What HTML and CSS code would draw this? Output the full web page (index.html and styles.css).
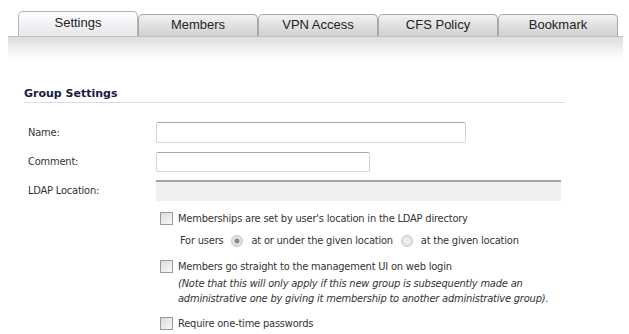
FILE: index.html
```html
<!DOCTYPE html>
<html>
<head>
<meta charset="utf-8">
<link rel="stylesheet" href="styles.css">
</head>
<body>
<div class="tabs">
  <div class="tab active">Settings</div>
  <div class="tab">Members</div>
  <div class="tab">VPN Access</div>
  <div class="tab">CFS Policy</div>
  <div class="tab">Bookmark</div>
</div>
<div class="band"></div>
<div class="content">
  <h2 class="heading">Group Settings</h2>
  <div class="row">
    <label class="label">Name:</label>
    <span class="input name-input"></span>
  </div>
  <div class="row">
    <label class="label">Comment:</label>
    <span class="input comment-input"></span>
  </div>
  <div class="row">
    <label class="label">LDAP Location:</label>
    <span class="input ldap-input"></span>
  </div>
  <div class="options">
    <div class="opt">
      <span class="check"></span>
      <div class="opt-text">
        <div>Memberships are set by user's location in the LDAP directory</div>
        <div class="sub">For users <span class="radio on"></span> at or under the given location <span class="radio"></span> at the given location</div>
      </div>
    </div>
    <div class="opt">
      <span class="check"></span>
      <div class="opt-text">
        <div>Members go straight to the management UI on web login</div>
        <div class="note">(Note that this will only apply if this new group is subsequently made an administrative one by giving it membership to another administrative group).</div>
      </div>
    </div>
    <div class="opt">
      <span class="check"></span>
      <div class="opt-text">
        <div>Require one-time passwords</div>
      </div>
    </div>
  </div>
</div>
</body>
</html>
```
FILE: styles.css
```css
html, body {
  margin: 0;
  padding: 0;
  background: #fff;
}
body {
  width: 629px;
  height: 334px;
  overflow: hidden;
  font-family: "DejaVu Sans Condensed", "DejaVu Sans", sans-serif;
  font-size: 11px;
  letter-spacing: -0.2px;
  color: #333;
}
.tabs {
  display: flex;
  align-items: flex-end;
  padding: 11px 0 0 18px;
  height: 25px;
  letter-spacing: 0;
}
.tab {
  box-sizing: border-box;
  width: 120px;
  height: 22px;
  border: 1px solid #a8a8a8;
  border-bottom: none;
  border-radius: 5px 5px 0 0;
  background: linear-gradient(#f2f2f2, #d0d0d0);
  font-family: "Liberation Sans", Arial, sans-serif;
  font-size: 13px;
  color: #222;
  text-align: center;
  line-height: 19px;
}
.tab.active {
  width: 120px;
  height: 25px;
  background: linear-gradient(#ffffff, #e6e6ec);
  line-height: 21px;
  border-color: #b4b4b4;
}
.band {
  margin: 0 6px 0 8px;
  height: 22px;
  border-top: 1px solid #c0c0c0;
  background: linear-gradient(#dcdcdc, #ffffff);
}
.content {
  padding: 0 0 0 24px;
}
.heading {
  margin: 28px 0 0 0;
  width: 541px;
  font-family: "DejaVu Sans", sans-serif;
  font-size: 11px;
  font-weight: bold;
  letter-spacing: 0;
  color: #1a1a44;
  padding-bottom: 1px;
  border-bottom: 1px solid #dcdce4;
  line-height: 14px;
}
.row {
  display: flex;
  align-items: center;
  height: 29px;
}
.row:first-of-type {
  margin-top: 15px;
}
.label {
  width: 132px;
  padding-left: 4px;
  box-sizing: border-box;
}
.input {
  box-sizing: border-box;
  display: block;
  height: 21px;
  border: 1px solid #d4d4d4;
  border-top-color: #a8a8a8;
  border-radius: 2px;
  background: #fff;
}
.name-input { width: 310px; }
.comment-input { width: 214px; height: 20px; }
.ldap-input {
  width: 405px;
  background: #efeff2;
  border: none;
  border-top: 2px solid #a4a4a4;
  border-radius: 0;
}
.options {
  margin-top: 5px;
  padding-left: 136px;
}
.opt {
  display: flex;
  align-items: flex-start;
  margin-bottom: 9px;
}
.check {
  box-sizing: border-box;
  width: 13px;
  height: 13px;
  margin-top: 2px;
  border: 1px solid #9a9a9a;
  background: linear-gradient(135deg, #dcdcdc, #f8f8f8);
  flex: none;
}
.opt-text {
  margin-left: 5px;
  line-height: 17px;
}
.sub {
  margin-top: 5px;
  padding-left: 2px;
  display: flex;
  align-items: center;
  white-space: pre;
}
.radio {
  display: inline-block;
  box-sizing: border-box;
  width: 12px;
  height: 12px;
  border-radius: 50%;
  border: 1px solid #c8c8c8;
  background: radial-gradient(circle, #f4f4f4, #d8d8d8);
  margin: 0 5px 0 5px;
}
.radio.on {
  background: radial-gradient(circle, #8a8a8a 0, #8a8a8a 2.2px, #e8e8e8 2.8px, #d4d4d4 6px);
}
.note {
  font-style: italic;
  width: 390px;
  margin-top: 1px;
  line-height: 15px;
}
```
